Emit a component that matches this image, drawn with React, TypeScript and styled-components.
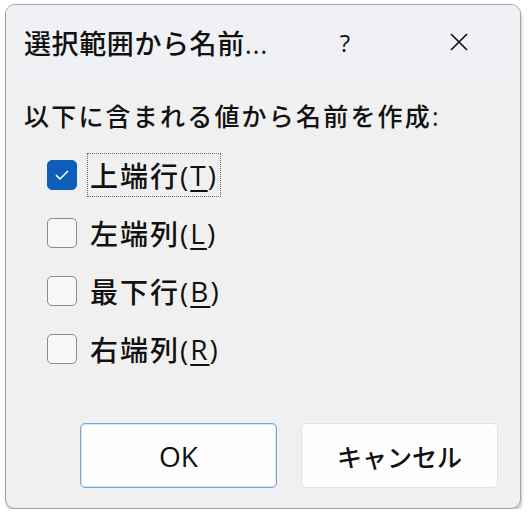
import React, { useState } from 'react'
import styled, { createGlobalStyle } from 'styled-components'

const GlobalStyle = createGlobalStyle`
  html, body {
    margin: 0;
    padding: 0;
    background: #ffffff;
  }
  body {
    font-family: "Open Sans", "Noto Sans CJK JP", sans-serif;
    font-weight: 500;
    color: #111111;
  }
`

interface IOption {
  label: string
  key: string
}

const options: IOption[] = [
  { label: '上端行', key: 'T' },
  { label: '左端列', key: 'L' },
  { label: '最下行', key: 'B' },
  { label: '右端列', key: 'R' },
]

export default function App() {
  const [checked, setChecked] = useState<boolean[]>([true, false, false, false])

  function toggle(i: number) {
    setChecked(checked.map((c, j) => (j === i ? !c : c)))
  }

  return (
    <>
      <GlobalStyle />
      <Dialog>
        <TitleBar>
          <Title>選択範囲から名前...</Title>
          <HelpButton>?</HelpButton>
          <CloseButton aria-label="閉じる">
            <svg width="20" height="20" viewBox="0 0 20 20">
              <path d="M2 2 L18 18 M18 2 L2 18" stroke="#111111" strokeWidth="1.7" fill="none" />
            </svg>
          </CloseButton>
        </TitleBar>
        <Body>
          <Prompt>以下に含まれる値から名前を作成:</Prompt>
          <List>
            {options.map((opt, i) => (
              <Row key={opt.key} onClick={() => toggle(i)}>
                <Box $checked={checked[i]}>
                  {checked[i] && (
                    <svg width="20" height="20" viewBox="0 0 20 20">
                      <path d="M4 10.2 L8 14 L16 6" stroke="#ffffff" strokeWidth="1.6" fill="none" />
                    </svg>
                  )}
                </Box>
                <Label $focused={i === 0}>
                  {opt.label}(<u>{opt.key}</u>)
                </Label>
              </Row>
            ))}
          </List>
        </Body>
        <Footer>
          <Button $primary><Latin>OK</Latin></Button>
          <Button>キャンセル</Button>
        </Footer>
      </Dialog>
    </>
  )
}

const Dialog = styled.div`
  box-sizing: border-box;
  display: flex;
  flex-direction: column;
  width: 516px;
  height: 505px;
  margin: 4px 0 0 5px;
  background: #f0f0f0;
  border: 1px solid #a4a4a4;
  border-radius: 10px;
  box-shadow: 1px 3px 3px rgba(0, 0, 0, 0.22);
  overflow: hidden;
`
const TitleBar = styled.div`
  display: flex;
  align-items: center;
  height: 74px;
  padding-left: 18px;
  background: #eff1f4;
`
const Title = styled.div`
  font-size: 27px;
  letter-spacing: 0.6px;
  width: 306px;
`
const HelpButton = styled.div`
  width: 30px;
  text-align: center;
  font-size: 24px;
`
const CloseButton = styled.div`
  display: flex;
  align-items: center;
  justify-content: center;
  margin-left: 84px;
  width: 30px;
`
const Body = styled.div`
  flex: 1;
  padding: 20px 0 0 18px;
`
const Prompt = styled.div`
  font-size: 25px;
  letter-spacing: 2.2px;
  line-height: 34px;
`
const List = styled.div`
  display: flex;
  flex-direction: column;
  margin-top: 13px;
  padding-left: 23px;
`
const Row = styled.div`
  display: flex;
  align-items: center;
  height: 58px;
  cursor: default;
`
const Box = styled.div<{ $checked?: boolean }>`
  box-sizing: border-box;
  display: flex;
  align-items: center;
  justify-content: center;
  width: 30px;
  height: 30px;
  border-radius: 5px;
  background: ${p => (p.$checked ? '#0f5fba' : '#f7f7f7')};
  border: 1.5px solid ${p => (p.$checked ? '#0f5fba' : '#8a8a8a')};
`
const Label = styled.div<{ $focused?: boolean }>`
  margin-left: 10px;
  padding: 0 2px;
  height: 42px;
  display: flex;
  align-items: center;
  font-size: 28px;
  letter-spacing: 2px;
  border: 1px dotted ${p => (p.$focused ? '#6a6a6a' : 'transparent')};
  u {
    text-underline-offset: 4px;
    text-decoration-thickness: 1.5px;
  }
`
const Footer = styled.div`
  display: flex;
  justify-content: flex-end;
  gap: 24px;
  padding: 0 22px 20px 0;
`
const Button = styled.div<{ $primary?: boolean }>`
  box-sizing: border-box;
  display: flex;
  align-items: center;
  justify-content: center;
  width: 197px;
  height: 65px;
  border-radius: 5px;
  background: #fdfdfd;
  font-size: 25px;
  border: 1px solid ${p => (p.$primary ? '#76a6d9' : '#e1e1e1')};
  box-shadow: ${p => (p.$primary ? 'inset 0 0 0 1px #d6e6f6' : 'none')};
`
const Latin = styled.span`
  font-size: 28px;
`
